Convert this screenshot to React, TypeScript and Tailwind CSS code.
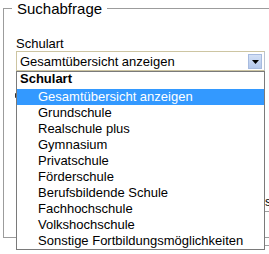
const options = [
  'Gesamtübersicht anzeigen',
  'Grundschule',
  'Realschule plus',
  'Gymnasium',
  'Privatschule',
  'Förderschule',
  'Berufsbildende Schule',
  'Fachhochschule',
  'Volkshochschule',
  'Sonstige Fortbildungsmöglichkeiten',
];

export default function App() {
  return (
    <div className="relative w-[269px] h-[254px] overflow-hidden bg-white text-black text-[13px] font-['Liberation_Sans',Arial,sans-serif]">
      <fieldset className="ml-[3px] w-[300px] h-[238px] border border-[#9c9c9c] pl-[12px]">
        <legend className="ml-[-4px] px-[5px] text-[15px] leading-[17px]">Suchabfrage</legend>

        <div className="pt-[19px] leading-[15px]">Schulart</div>

        <div className="relative w-[249px]">
          <div className="flex h-[20px] items-center border border-[#cdc5a2] border-r-[#b9c3cf] bg-white">
            <span className="flex-1 pl-[3px] leading-[15px]">Gesamtübersicht anzeigen</span>
            <span className="mr-[2px] mt-[1px] flex h-[15px] w-[14px] items-center justify-center border border-[#a7bbdf] bg-gradient-to-b from-[#d3e0f5] to-[#b4c8ec]">
              <svg width="7" height="4" viewBox="0 0 7 4">
                <path d="M0 0h7L3.5 4z" fill="#000" />
              </svg>
            </span>
          </div>

          <div className="absolute left-0 top-full z-10 w-[249px] border border-[#7a7a7a] bg-white">
            <div className="h-[17px] pl-[3px] font-bold leading-[14px]">Schulart</div>
            {options.map((o, i) => (
              <div
                key={o}
                className={
                  i === 0
                    ? 'h-[16px] bg-[#3399ff] pl-[21px] leading-[16px] text-white'
                    : 'h-[16px] pl-[21px] leading-[16px]'
                }
              >
                {o}
              </div>
            ))}
          </div>
        </div>

        {/* Inhalt unter der offenen Liste */}
        <div className="ml-[-1px] mt-[22px] h-[5px] w-[2px] rounded-full bg-[#333]" />
        <div className="ml-[249px] mt-[98px] h-[12px] text-[12px] leading-[12px]">s</div>
        <div className="mt-[3px] h-[35px] w-[280px] border border-[#a0a0a0]" />
      </fieldset>
    </div>
  );
}
